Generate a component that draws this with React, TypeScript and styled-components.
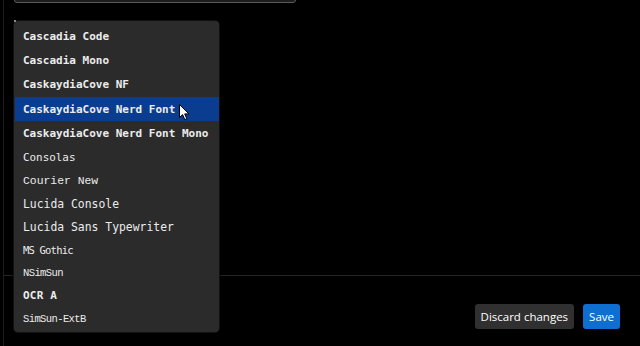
import styled, { createGlobalStyle } from 'styled-components';

const GlobalStyle = createGlobalStyle`
  html, body {
    margin: 0;
    padding: 0;
    background: #000;
    overflow: hidden;
  }
`;

type FontKind = 'cascadia' | 'consolas' | 'courier' | 'lucida' | 'gothic' | 'simsun' | 'ocr';

interface FontOption {
  name: string;
  kind: FontKind;
}

const fonts: FontOption[] = [
  { name: 'Cascadia Code', kind: 'cascadia' },
  { name: 'Cascadia Mono', kind: 'cascadia' },
  { name: 'CaskaydiaCove NF', kind: 'cascadia' },
  { name: 'CaskaydiaCove Nerd Font', kind: 'cascadia' },
  { name: 'CaskaydiaCove Nerd Font Mono', kind: 'cascadia' },
  { name: 'Consolas', kind: 'consolas' },
  { name: 'Courier New', kind: 'courier' },
  { name: 'Lucida Console', kind: 'lucida' },
  { name: 'Lucida Sans Typewriter', kind: 'lucida' },
  { name: 'MS Gothic', kind: 'gothic' },
  { name: 'NSimSun', kind: 'simsun' },
  { name: 'OCR A', kind: 'ocr' },
  { name: 'SimSun-ExtB', kind: 'simsun' },
];

const fontStyles: Record<FontKind, string> = {
  cascadia: `height: 24.3px; font-family: "DejaVu Sans Mono", monospace; font-size: 11px; font-weight: 700;`,
  consolas: `height: 23.7px; font-family: "DejaVu Sans Mono", monospace; font-size: 10.9px;`,
  courier: `height: 22.8px; font-family: "Liberation Mono", monospace; font-size: 11.4px;`,
  lucida: `height: 23.2px; font-family: "DejaVu Sans Mono", monospace; font-size: 11.4px;`,
  gothic: `height: 23px; font-family: "DejaVu Sans Mono", monospace; font-size: 10.5px; letter-spacing: -0.8px;`,
  simsun: `height: 23px; font-family: "Liberation Mono", monospace; font-size: 10.5px; letter-spacing: -0.6px;`,
  ocr: `height: 23px; font-family: "DejaVu Sans Mono", monospace; font-size: 11px; font-weight: 700; letter-spacing: 0.2px;`,
};

export default function App() {
  const selected = 'CaskaydiaCove Nerd Font';

  return (
    <>
      <GlobalStyle />
      <Page>
        <Panel>
          <Content>
            <FontInput />
            <Dropdown>
              <Corner />
              {fonts.map((f) => (
                <Option key={f.name} $kind={f.kind} $active={f.name === selected}>
                  {f.name}
                  {f.name === selected && (
                    <Cursor width="11" height="17" viewBox="0 0 11 17">
                      <path
                        d="M0.5 0.5 L0.5 13.5 L3.6 10.6 L5.8 15.6 L7.8 14.7 L5.7 9.9 L9.9 9.9 Z"
                        fill="#fff"
                        stroke="#000"
                        strokeWidth="1"
                        strokeLinejoin="round"
                      />
                    </Cursor>
                  )}
                </Option>
              ))}
            </Dropdown>
          </Content>
          <Footer>
            <Button>Discard changes</Button>
            <Button $primary>Save</Button>
          </Footer>
        </Panel>
      </Page>
    </>
  );
}

const Page = styled.div`
  width: 640px;
  height: 346px;
  background: #000;
  display: flex;
  padding-left: 3px;
  box-sizing: border-box;
`;

const Panel = styled.div`
  flex: 1;
  display: flex;
  flex-direction: column;
  border-left: 1px solid #1e1e1e;
  position: relative;
`;

const Content = styled.div`
  height: 276px;
  border-bottom: 1px solid #262626;
  padding-left: 10px;
  box-sizing: border-box;
`;

const FontInput = styled.div`
  width: 282px;
  height: 30px;
  margin-top: -27px;
  box-sizing: border-box;
  background: #1c1c1c;
  border: 1px solid #5a5a5a;
  border-radius: 3px;
`;

const Dropdown = styled.div`
  position: absolute;
  top: 21px;
  left: 10px;
  width: 205px;
  padding: 3px 0 2px 1px;
  box-sizing: border-box;
  background: #2b2b2b;
  border-radius: 4px;
  box-shadow: 0 0 0 1px #111, 0 2px 6px rgba(0, 0, 0, 0.6);
  z-index: 2;
`;

const Corner = styled.span`
  position: absolute;
  top: -1px;
  left: 0;
  width: 2px;
  height: 2px;
  background: #8a8a8a;
`;

const Option = styled.div<{ $kind: FontKind; $active?: boolean }>`
  position: relative;
  display: flex;
  align-items: center;
  padding-left: 8px;
  color: #ececec;
  white-space: nowrap;
  background: ${(p) => (p.$active ? '#0a3d8f' : 'transparent')};
  ${(p) => fontStyles[p.$kind]}
`;

const Cursor = styled.svg`
  position: absolute;
  left: 164px;
  top: 7px;
`;

const Footer = styled.div`
  flex: 1;
  display: flex;
  justify-content: flex-end;
  align-items: flex-start;
  gap: 9px;
  padding: 28px 20px 0 0;
`;

const Button = styled.button<{ $primary?: boolean }>`
  height: 25px;
  padding: 0 6px;
  border: none;
  border-radius: 3px;
  font-family: 'Open Sans', sans-serif;
  font-size: 11.5px;
  color: #fff;
  background: ${(p) => (p.$primary ? '#0f6fd1' : '#303030')};
  cursor: pointer;
`;
